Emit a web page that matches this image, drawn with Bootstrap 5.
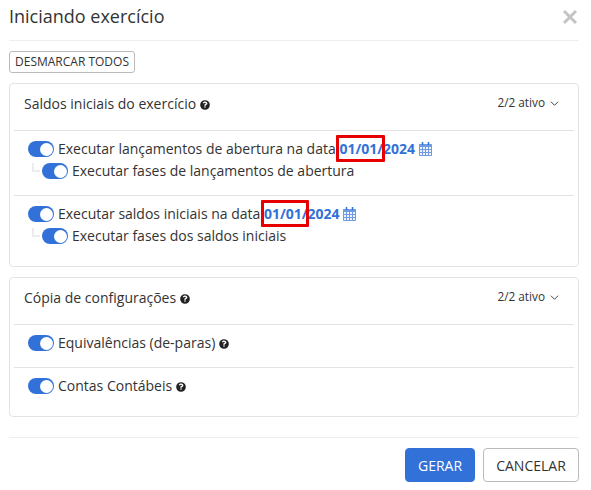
<!DOCTYPE html>
<html lang="pt-BR">

<head>
    <meta charset="UTF-8">
    <meta name="viewport" content="width=device-width, initial-scale=1">
    <title>Iniciando exercício</title>
    <link href="https://cdn.jsdelivr.net/npm/bootstrap@5.3.0/dist/css/bootstrap.min.css" rel="stylesheet">
    <script src="https://cdn.jsdelivr.net/npm/bootstrap@5.3.0/dist/js/bootstrap.bundle.min.js"></script>
    <style>
        body { font-family: "Open Sans", sans-serif; font-size: 14px; color: #333; background: #fff; }
        .dlg { padding: 0 12px 9px 9px; }
        .dlg-head { height: 41px; border-bottom: 1px solid #eee; padding-bottom: 7px; }
        .dlg-title { font-size: 18px; font-weight: 400; line-height: 24px; margin: 0 0 1px; color: #333; }
        .dlg-close { width: 16px; height: 16px; margin-right: 1px; color: #c4c4c4; }
        .btn-mini { font-size: 12px; line-height: 16px; padding: 2px 5px; height: 22px; margin: 10px 0 10px; color: #333; border: 1px solid #bbb; border-radius: 3px; background: #fff; }
        .box { border: 1px solid #e3e3e3; border-radius: 4px; padding: 0 4px; margin-bottom: 10px; }
        .box-head { height: 47px; padding: 0 15px 8px 10px; border-bottom: 1px solid #e3e3e3; }
        .box-count { font-size: 11.8px; display: flex; align-items: center; }
        .chev { width: 9px; height: 9px; margin-left: 5px; }
        .help { width: 10px; height: 10px; }
        .opt { position: relative; padding: 7px 14px 0; }
        .opt + .opt { border-top: 1px solid #e3e3e3; }
        .box-a .opt { height: 64px; }
        .box-a .opt:last-child { height: 71px; }
        .box-b .opt { height: 42px; }
        .box-b .opt:last-child { height: 49px; }
        .line { height: 22px; line-height: 22px; white-space: nowrap; }
        .line.sub { padding-left: 14px; position: relative; }
        .line.sub::before { content: ""; position: absolute; left: 4px; top: 3px; width: 8px; height: 9px; border-left: 2px solid #ececec; border-bottom: 2px solid #ececec; }
        .tgl { display: inline-block; position: relative; width: 26px; height: 16px; border-radius: 8px; background: #3271d8; vertical-align: -3px; margin-right: 4px; }
        .tgl::after { content: ""; position: absolute; right: 1px; top: 1.5px; width: 13px; height: 13px; border-radius: 50%; background: #fff; }
        .dt { font-weight: 700; color: #3271d8; }
        .cal { width: 13px; height: 14px; vertical-align: -2px; }
        .mark-red { position: absolute; top: 4px; height: 27px; border: 3px solid #e60000; border-radius: 1px; }
        .mark-a { left: 322px; width: 49px; }
        .mark-b { left: 247px; width: 48px; }
        .dlg-foot { border-top: 1px solid #eee; margin-top: 20px; padding-top: 10px; }
        .btn-go { background: #3271d8; border: 1px solid #3271d8; color: #fff; border-radius: 4px; font-size: 14px; width: 70px; height: 34px; padding: 0; }
        .btn-no { background: #fff; border: 1px solid #bbb; color: #333; border-radius: 4px; font-size: 14px; width: 96px; height: 34px; padding: 0; }
    </style>
</head>

<body>

    <svg width="0" height="0" class="d-block">
        <symbol id="ico-help" viewBox="0 0 512 512">
            <path fill="#222" fill-rule="evenodd" d="M256 8a248 248 0 1 0 0 496 248 248 0 0 0 0-496zm0 390a42 42 0 1 1 0-84 42 42 0 0 1 0 84zm38-122v6c0 7-5 12-12 12h-52c-7 0-12-5-12-12v-10c0-40 30-56 53-69 20-11 32-18 32-33 0-20-25-33-46-33-27 0-39 13-56 35-4 5-12 6-17 2l-32-24c-5-4-6-11-3-16 27-40 61-62 114-62 56 0 116 44 116 101 0 76-85 77-85 103z"/>
        </symbol>
        <symbol id="ico-cal" viewBox="0 0 13 14">
            <path fill="#eef3fc" stroke="#6f9be3" stroke-width="1" d="M.5 2.500h12v11H.5z"/>
            <path fill="#6f9be3" d="M.5 2.500h12v2.500H.5z"/>
            <path fill="none" stroke="#6f9be3" stroke-width="1" d="M.5 7.500h12M.5 10.500h12M3.500 5v8M6.500 5v8M9.500 5v8"/>
            <path fill="none" stroke="#3271d8" stroke-width="1.500" d="M3.500 0v3M9.500 0v3"/>
        </symbol>
    </svg>

    <div class="dlg">
        <div class="dlg-head d-flex justify-content-between align-items-center">
            <h5 class="dlg-title">Iniciando exercício</h5>
            <svg class="dlg-close" viewBox="0 0 16 16"><path d="M2 2l12 12M14 2L2 14" stroke="currentColor" stroke-width="3" fill="none"/></svg>
        </div>

        <button type="button" class="btn-mini d-block">DESMARCAR TODOS</button>

        <div class="box box-a">
            <div class="box-head d-flex justify-content-between align-items-center">
                <span>Saldos iniciais do exercício <svg class="help"><use href="#ico-help"/></svg></span>
                <span class="box-count">2/2 ativo
                    <svg class="chev" viewBox="0 0 10 10"><path d="M1 3l4 4 4-4" stroke="#333" fill="none"/></svg>
                </span>
            </div>
            <div class="opt">
                <div class="line"><span class="tgl"></span>Executar lançamentos de abertura na data <span class="dt">01/01/2024</span> <svg class="cal"><use href="#ico-cal"/></svg></div>
                <div class="line sub"><span class="tgl"></span>Executar fases de lançamentos de abertura</div>
                <div class="mark-red mark-a"></div>
            </div>
            <div class="opt">
                <div class="line"><span class="tgl"></span>Executar saldos iniciais na data <span class="dt">01/01/2024</span> <svg class="cal"><use href="#ico-cal"/></svg></div>
                <div class="line sub"><span class="tgl"></span>Executar fases dos saldos iniciais</div>
                <div class="mark-red mark-b"></div>
            </div>
        </div>

        <div class="box box-b">
            <div class="box-head d-flex justify-content-between align-items-center">
                <span>Cópia de configurações <svg class="help"><use href="#ico-help"/></svg></span>
                <span class="box-count">2/2 ativo
                    <svg class="chev" viewBox="0 0 10 10"><path d="M1 3l4 4 4-4" stroke="#333" fill="none"/></svg>
                </span>
            </div>
            <div class="opt">
                <div class="line"><span class="tgl"></span>Equivalências (de-paras) <svg class="help"><use href="#ico-help"/></svg></div>
            </div>
            <div class="opt">
                <div class="line"><span class="tgl"></span>Contas Contábeis <svg class="help"><use href="#ico-help"/></svg></div>
            </div>
        </div>

        <div class="dlg-foot d-flex justify-content-end gap-2">
            <button type="button" class="btn-go">GERAR</button>
            <button type="button" class="btn-no">CANCELAR</button>
        </div>
    </div>

</body>

</html>
